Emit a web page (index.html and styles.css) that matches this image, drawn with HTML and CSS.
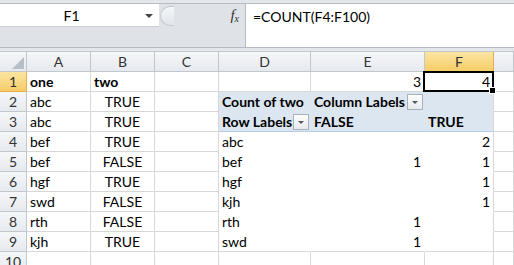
FILE: index.html
```html
<!DOCTYPE html>
<html>
<head>
	<meta charset="UTF-8">
	<title>Book1</title>
	<link rel="stylesheet" href="styles.css">
</head>
<body>
	<div class="topstrip"></div>
	<div class="formula">
		<div class="namecol">
			<div class="namebar">
				<div class="namebox">F1<span class="caret"></span></div>
				<div class="knob"></div>
				<div class="fx">f<sub>x</sub></div>
			</div>
		</div>
		<div class="fbar">=COUNT(F4:F100)</div>
	</div>
	<div class="split"></div>
	<div class="sheet">
		<!-- header -->
		<div class="h corner"></div>
		<div class="h">A</div><div class="h">B</div><div class="h">C</div><div class="h">D</div><div class="h">E</div><div class="h sel">F</div><div class="h"></div>
		<!-- 1 -->
		<div class="r sel">1</div>
		<div class="c b">one</div><div class="c b">two</div><div class="c"></div><div class="c"></div><div class="c num">3</div><div class="c num active">4</div><div class="c"></div>
		<!-- 2 -->
		<div class="r">2</div>
		<div class="c">abc</div><div class="c ctr">TRUE</div><div class="c"></div>
		<div class="c b pv">Count of two</div>
		<div class="c b pv pvdrop">Column Labels<span class="btn"></span></div>
		<div class="c pv pvend"></div><div class="c"></div>
		<!-- 3 -->
		<div class="r">3</div>
		<div class="c">abc</div><div class="c ctr">TRUE</div><div class="c"></div>
		<div class="c b pv pvlast pvdrop">Row Labels<span class="btn"></span></div>
		<div class="c b pv pvlast">FALSE</div>
		<div class="c b pv pvlast pvend">TRUE</div><div class="c"></div>
		<!-- 4 -->
		<div class="r">4</div>
		<div class="c">bef</div><div class="c ctr">TRUE</div><div class="c"></div>
		<div class="c pd">abc</div><div class="c pd"></div><div class="c num pd pdend">2</div><div class="c"></div>
		<!-- 5 -->
		<div class="r">5</div>
		<div class="c">bef</div><div class="c ctr">FALSE</div><div class="c"></div>
		<div class="c pd">bef</div><div class="c num pd">1</div><div class="c num pd pdend">1</div><div class="c"></div>
		<!-- 6 -->
		<div class="r">6</div>
		<div class="c">hgf</div><div class="c ctr">TRUE</div><div class="c"></div>
		<div class="c pd">hgf</div><div class="c pd"></div><div class="c num pd pdend">1</div><div class="c"></div>
		<!-- 7 -->
		<div class="r">7</div>
		<div class="c">swd</div><div class="c ctr">FALSE</div><div class="c"></div>
		<div class="c pd">kjh</div><div class="c pd"></div><div class="c num pd pdend">1</div><div class="c"></div>
		<!-- 8 -->
		<div class="r">8</div>
		<div class="c">rth</div><div class="c ctr">FALSE</div><div class="c"></div>
		<div class="c pd">rth</div><div class="c num pd">1</div><div class="c pd pdend"></div><div class="c"></div>
		<!-- 9 -->
		<div class="r">9</div>
		<div class="c">kjh</div><div class="c ctr">TRUE</div><div class="c"></div>
		<div class="c pd pdlast">swd</div><div class="c num pd pdlast">1</div><div class="c pd pdend pdlast"></div><div class="c"></div>
		<!-- 10 -->
		<div class="r">10</div>
		<div class="c"></div><div class="c"></div><div class="c"></div><div class="c"></div><div class="c"></div><div class="c"></div><div class="c"></div>
	</div>
</body>
</html>
```

FILE: styles.css
```css
*{margin:0;padding:0;box-sizing:border-box;}
body{
	width:514px;
	height:265px;
	overflow:hidden;
	background:#fff;
	font-family:Lato,"Liberation Sans",sans-serif;
	font-size:14px;
	color:#000;
}
.topstrip{
	height:4px;
	background:#e3e6ea;
	border-bottom:1px solid #b9bec5;
}
.formula{
	display:flex;
	height:43px;
}
.namecol{
	width:246px;
	background:#dfe3e8;
	border-right:1px solid #b4bac2;
}
.namebar{
	display:flex;
	align-items:center;
	height:23px;
}
.namebox{
	position:relative;
	width:159px;
	height:23px;
	background:#fff;
	text-align:center;
	line-height:23px;
	padding-right:16px;
	border-bottom:1px solid #c9ced5;
}
.caret{
	position:absolute;
	right:6px;
	top:10px;
	border-left:4px solid transparent;
	border-right:4px solid transparent;
	border-top:4px solid #444;
}
.knob{
	width:14px;
	height:20px;
	border:1px solid #c4c9d0;
	border-right:none;
	border-radius:10px 0 0 10px;
	background:linear-gradient(#f4f6f8,#e1e5ea);
	margin-left:1px;
}
.fx{
	margin-left:auto;
	margin-right:6px;
	font-family:"Liberation Serif",serif;
	font-style:italic;
	font-size:15px;
	color:#333;
}
.fx sub{
	font-size:10px;
	vertical-align:-2px;
}
.fbar{
	flex:1;
	background:#fff;
	padding:4px 7px;
	line-height:17px;
}
.split{
	height:5px;
	background:#e4e7eb;
	border-top:1px solid #b4bac2;
	border-bottom:1px solid #c3c8ce;
}
.sheet{
	display:grid;
	grid-template-columns:27px 64px 64px 64px 92px 114px 69px 1fr;
	grid-auto-rows:20px;
}
.h,.r{
	background:linear-gradient(#f5f7f9,#e6e9ee);
	border-right:1px solid #c2c7ce;
	border-bottom:1px solid #c2c7ce;
	color:#333;
	text-align:center;
	line-height:19px;
}
.h.sel,.r.sel{
	background:linear-gradient(#fbe5a2,#f6cd68);
	border-color:#e6b04e;
}
.corner{
	position:relative;
}
.corner::after{
	content:"";
	position:absolute;
	right:2px;
	bottom:2px;
	border-left:12px solid transparent;
	border-bottom:12px solid #b8bec6;
}
.c{
	border-right:1px solid #d8d8d8;
	border-bottom:1px solid #d8d8d8;
	line-height:19px;
	padding:0 3px;
	white-space:nowrap;
}
.b{font-weight:bold;}
.ctr{text-align:center;}
.num{text-align:right;}
.active{
	position:relative;
}
.active::after{
	content:"";
	position:absolute;
	left:-2px;
	top:-1px;
	right:-1px;
	bottom:-1px;
	border:2px solid #000;
}
.active::before{
	content:"";
	position:absolute;
	right:-3px;
	bottom:-3px;
	width:5px;
	height:5px;
	background:#000;
	border:1px solid #fff;
	z-index:1;
}
.pv{
	background:#dce6f1;
	border-right-color:#dce6f1;
	border-bottom-color:#dce6f1;
}
.pvlast{border-bottom-color:#b8cce4;}
.pvend{border-right-color:#d8d8d8;}
.pvdrop{
	position:relative;
	overflow:visible;
}
.btn{
	position:absolute;
	right:1px;
	top:2px;
	width:16px;
	height:16px;
	border:1px solid #a9b0b8;
	background:linear-gradient(#fdfdfd,#e8ebee);
}
.btn::after{
	content:"";
	position:absolute;
	left:4px;
	top:6px;
	border-left:3px solid transparent;
	border-right:3px solid transparent;
	border-top:3px solid #555;
}
.pd{
	border-right-color:#fff;
	border-bottom-color:#fff;
}
.pdend{border-right-color:#d8d8d8;}
.pdlast{border-bottom-color:#d8d8d8;}
```
